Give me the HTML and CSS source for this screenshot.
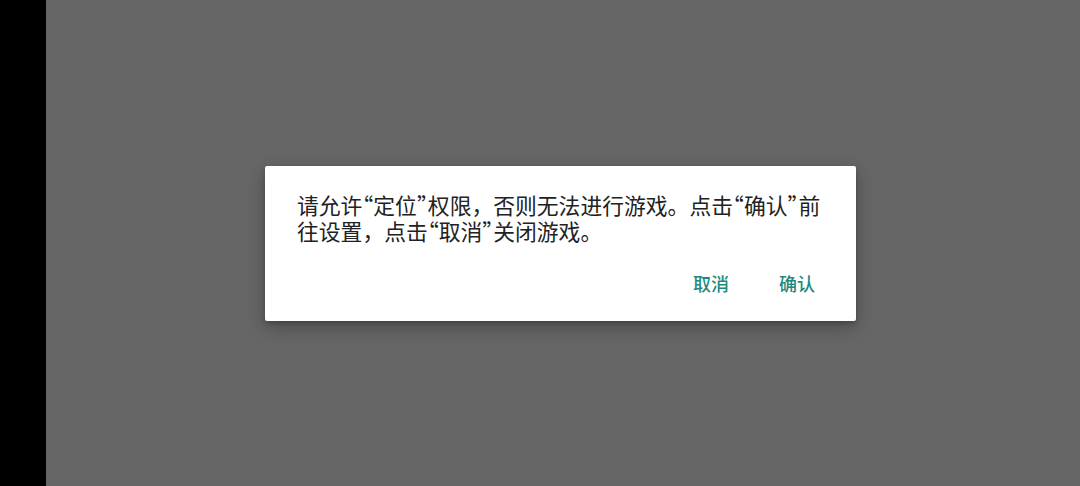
FILE: index.html
```html
<!DOCTYPE html>
<html lang="zh-CN">
<head>
<meta charset="utf-8">
<title>权限提示</title>
<link rel="stylesheet" href="styles.css">
</head>
<body>
<div class="screen">
  <div class="edge"></div>
  <div class="stage">
    <div class="dialog">
      <p class="message">请允许<span class="q">“</span>定位<span class="q">”</span>权限，否则无法进行游戏。点击<span class="q">“</span>确认<span class="q">”</span>前往设置，点击<span class="q">“</span>取消<span class="q">”</span>关闭游戏。</p>
      <div class="actions">
        <span class="btn">取消</span>
        <span class="btn">确认</span>
      </div>
    </div>
  </div>
</div>
</body>
</html>
```
FILE: styles.css
```css
html, body {
  margin: 0;
  padding: 0;
}
body {
  font-family: "Noto Sans CJK SC", "Noto Sans", sans-serif;
  background: #666666;
}
.screen {
  display: flex;
  width: 1080px;
  height: 486px;
}
.edge {
  width: 46px;
  background: #000000;
}
.stage {
  flex: 1;
  background: #666666;
  display: flex;
  align-items: center;
  padding-left: 219px;
}
.dialog {
  box-sizing: border-box;
  width: 591px;
  height: 155px;
  background: #ffffff;
  border-radius: 2px;
  box-shadow: 0 6px 18px rgba(0, 0, 0, 0.28), 0 2px 4px rgba(0, 0, 0, 0.18);
  padding: 26px 32px 0 32px;
}
.message {
  margin: 0;
  font-size: 21.8px;
  line-height: 26px;
  color: #222222;
}
.q {
  font-feature-settings: "halt" 1;
}
.actions {
  display: flex;
  justify-content: flex-end;
  gap: 50px;
  margin-top: 21px;
  padding-right: 9px;
}
.btn {
  font-size: 18px;
  line-height: 36px;
  font-weight: 500;
  color: #1e8a7e;
}
```
